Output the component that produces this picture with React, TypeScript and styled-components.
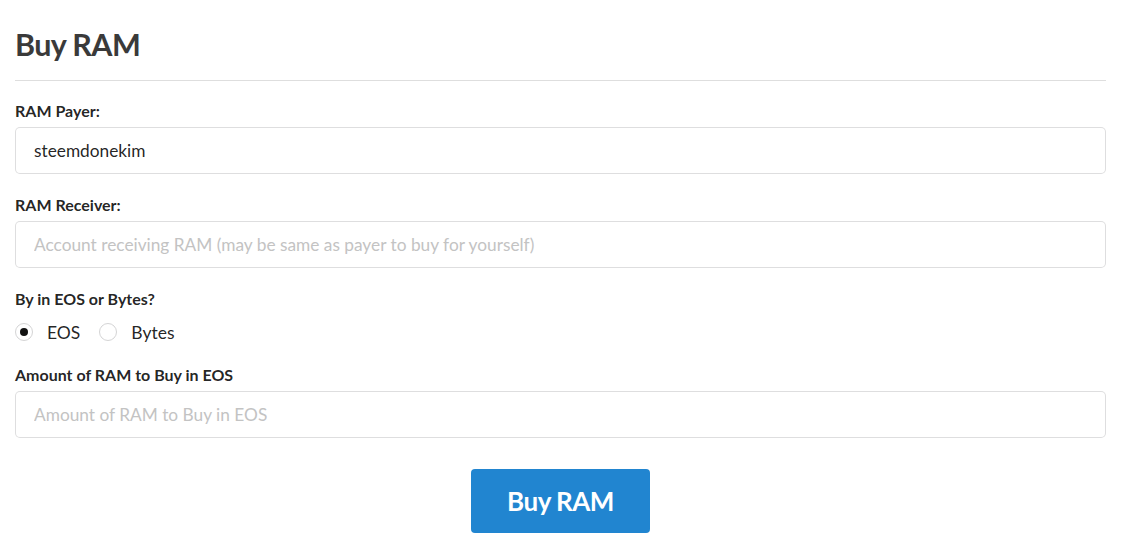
import React from "react";
import styled, { createGlobalStyle } from "styled-components";

const Global = createGlobalStyle`
  html, body { margin: 0; padding: 0; background: #fff; }
  body { font-family: Lato, "Helvetica Neue", Arial, sans-serif; color: rgba(0,0,0,0.87); }
  * { box-sizing: border-box; }
`;

const Page = styled.div`
  padding: 22px 15px 0 15px;
`;

const Title = styled.h1`
  margin: 0;
  font-family: Lato, sans-serif;
  font-size: 30.5px;
  font-weight: 700;
  letter-spacing: -0.6px;
  color: #3a3a3a;
  line-height: 44px;
  padding-bottom: 14px;
  border-bottom: 1px solid #dedede;
`;

const Form = styled.form`
  display: flex;
  flex-direction: column;
  padding-top: 20px;
`;

const Field = styled.div`
  display: flex;
  flex-direction: column;
  gap: 7px;
  margin-bottom: 21px;
`;

const Label = styled.label`
  font-size: 16px;
  font-weight: 700;
  color: rgba(0,0,0,0.87);
  line-height: 19px;
`;

const Input = styled.input`
  height: 47px;
  width: 100%;
  border: 1px solid rgba(34,36,38,0.15);
  border-radius: 5px;
  padding: 0 18px;
  font-family: Lato, sans-serif;
  font-size: 17.3px;
  color: rgba(0,0,0,0.87);
  outline: none;
  &::placeholder { color: #c3c3c3; }
`;

const RadioRow = styled.div`
  display: flex;
  align-items: center;
  gap: 19px;
  height: 34px;
  margin-top: 0;
  margin-bottom: -5px;
`;

const RadioItem = styled.label`
  display: flex;
  align-items: center;
  gap: 14px;
  font-size: 17.5px;
  color: rgba(0,0,0,0.87);
`;

const RadioDot = styled.span<{ $checked?: boolean }>`
  width: 18px;
  height: 18px;
  border-radius: 50%;
  border: 1px solid #d4d4d5;
  background: #fff;
  display: flex;
  align-items: center;
  justify-content: center;
  &::after {
    content: "";
    width: 8px;
    height: 8px;
    border-radius: 50%;
    background: ${(p) => (p.$checked ? "#111" : "transparent")};
  }
`;

const ButtonRow = styled.div`
  display: flex;
  justify-content: center;
  margin-top: 10px;
`;

const Button = styled.button`
  width: 179px;
  height: 64px;
  background: #2185d0;
  color: #fff;
  border: none;
  border-radius: 4px;
  font-family: Lato, sans-serif;
  font-weight: 700;
  font-size: 26px;
  letter-spacing: -0.5px;
  cursor: pointer;
`;

export default function App() {
  return (
    <>
      <Global />
      <Page>
        <Title>Buy RAM</Title>
        <Form onSubmit={(e) => e.preventDefault()}>
          <Field>
            <Label>RAM Payer:</Label>
            <Input defaultValue="steemdonekim" />
          </Field>
          <Field>
            <Label>RAM Receiver:</Label>
            <Input placeholder="Account receiving RAM (may be same as payer to buy for yourself)" />
          </Field>
          <Field>
            <Label>By in EOS or Bytes?</Label>
            <RadioRow>
              <RadioItem>
                <RadioDot $checked />
                EOS
              </RadioItem>
              <RadioItem>
                <RadioDot />
                Bytes
              </RadioItem>
            </RadioRow>
          </Field>
          <Field>
            <Label>Amount of RAM to Buy in EOS</Label>
            <Input placeholder="Amount of RAM to Buy in EOS" />
          </Field>
          <ButtonRow>
            <Button type="button">Buy RAM</Button>
          </ButtonRow>
        </Form>
      </Page>
    </>
  );
}
